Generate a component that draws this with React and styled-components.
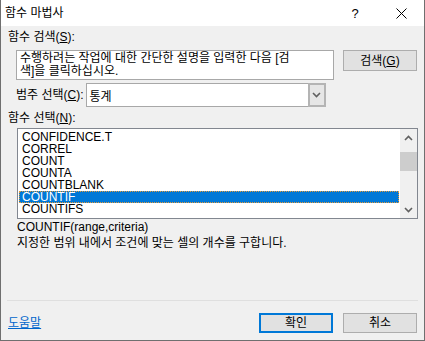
import React from 'react'
import styled, { createGlobalStyle } from 'styled-components'

const GlobalStyle = createGlobalStyle`
  html, body {
    margin: 0;
    padding: 0;
    background: #f0f0f0;
  }
  body {
    font-family: "Liberation Sans", "Noto Sans CJK KR", sans-serif;
    font-size: 12px;
    color: #000;
  }
`;

const Window = styled.div`
width: 425px;
height: 341px;
box-sizing: border-box;
border: 1px solid #6f6f6f;
border-top: none;
display: flex;
flex-direction: column;
background: #f0f0f0;
overflow: hidden;
`;

const TitleBar = styled.div`
height: 26px;
background: #ffffff;
display: flex;
align-items: center;
padding-left: 4px;
flex-shrink: 0;
`;

const Title = styled.div`
flex: 1;
line-height: 14px;
`;

const TitleButton = styled.div`
width: 46px;
height: 26px;
display: flex;
align-items: center;
justify-content: center;
font-size: 13px;
`;

const Body = styled.div`
flex: 1;
display: flex;
flex-direction: column;
padding: 4px 6px 7px 6px;
`;

const Label = styled.div`
line-height: 14px;
height: 14px;
margin-top: ${({ top }) => top || 0}px;
margin-left: ${({ indent }) => indent || 0}px;
white-space: nowrap;
`;

const SearchRow = styled.div`
display: flex;
align-items: flex-start;
gap: 9px;
margin: 6px 0 0 9px;
`;

const SearchBox = styled.div`
width: 318px;
height: 30px;
box-sizing: border-box;
background: #fff;
border: 1px solid #a8a8a8;
padding: 1px 3px;
line-height: 13px;
`;

const Button = styled.div`
width: ${({ w }) => w || 74}px;
height: ${({ h }) => h || 21}px;
box-sizing: border-box;
background: #e1e1e1;
border: ${({ primary }) => (primary ? '2px solid #0078d7' : '1px solid #adadad')};
display: flex;
align-items: center;
justify-content: center;
line-height: 14px;
`;

const CategoryRow = styled.div`
display: flex;
align-items: center;
margin: 3px 0 0 9px;
gap: 2px;
`;

const Select = styled.div`
width: 240px;
height: 24px;
box-sizing: border-box;
background: #fff;
border: 1px solid #a8a8a8;
display: flex;
align-items: stretch;
`;

const SelectValue = styled.div`
flex: 1;
padding-left: 3px;
display: flex;
align-items: center;
`;

const SelectArrow = styled.div`
width: 18px;
box-sizing: border-box;
background: #e6e6e6;
border: 2px solid #b4b4b4;
border-right: none;
margin: -1px -1px -1px 0;
border-right: 2px solid #b4b4b4;
display: flex;
align-items: center;
justify-content: center;
`;

const ListBox = styled.div`
width: 401px;
height: 91px;
box-sizing: border-box;
margin: 3px 0 0 10px;
background: #fff;
border: 1px solid #828790;
display: flex;
`;

const Items = styled.div`
flex: 1;
padding: 2px 1px 0 1px;
`;

const Item = styled.div`
height: 12px;
line-height: 12px;
padding-left: 3px;
box-sizing: border-box;
background: ${({ selected }) => (selected ? '#0078d7' : 'transparent')};
color: ${({ selected }) => (selected ? '#fff' : '#000')};
outline: ${({ selected }) => (selected ? '1px dotted #e39a3a' : 'none')};
outline-offset: -1px;
white-space: nowrap;
`;

const ScrollBar = styled.div`
width: 17px;
background: #f0f0f0;
display: flex;
flex-direction: column;
align-items: center;
`;

const ScrollArrow = styled.div`
height: 17px;
width: 17px;
display: flex;
align-items: center;
justify-content: center;
`;

const Track = styled.div`
flex: 1;
width: 17px;
`;

const Thumb = styled.div`
height: 19px;
margin-top: 6px;
background: #cdcdcd;
`;

const Description = styled.div`
margin-left: 10px;
line-height: 16px;
`;

const Spacer = styled.div`
flex: 1;
`;

const Separator = styled.div`
height: 1px;
background: #dfdfdf;
margin-bottom: 12px;
`;

const Footer = styled.div`
display: flex;
align-items: center;
gap: 10px;
padding-right: 1px;
`;

const HelpLink = styled.a`
flex: 1;
color: #0066cc;
text-decoration: underline;
line-height: 14px;
padding-left: 1px;
`;

const Chevron = ({ up }) => (
  <svg width="9" height="6" viewBox="0 0 9 6">
    <path
      d={up ? 'M1 5 L4.5 1.5 L8 5' : 'M1 1 L4.5 4.5 L8 1'}
      fill="none"
      stroke="#606060"
      strokeWidth="1.6"
    />
  </svg>
);

const functions = [
  'CONFIDENCE.T',
  'CORREL',
  'COUNT',
  'COUNTA',
  'COUNTBLANK',
  'COUNTIF',
  'COUNTIFS',
];

const App = () => {
  return (
    <>
      <GlobalStyle />
      <Window>
        <TitleBar>
          <Title>함수 마법사</Title>
          <TitleButton>?</TitleButton>
          <TitleButton>
            <svg width="11" height="11" viewBox="0 0 11 11">
              <path d="M0.5 0.5 L10.5 10.5 M10.5 0.5 L0.5 10.5" stroke="#000" strokeWidth="1" />
            </svg>
          </TitleButton>
        </TitleBar>
        <Body>
          <Label indent={1}>함수 검색(<u>S</u>):</Label>
          <SearchRow>
            <SearchBox>
              수행하려는 작업에 대한 간단한 설명을 입력한 다음 [검
              <br />
              색]을 클릭하십시오.
            </SearchBox>
            <Button>검색(<u>G</u>)</Button>
          </SearchRow>
          <CategoryRow>
            <Label>범주 선택(<u>C</u>):</Label>
            <Select>
              <SelectValue>통계</SelectValue>
              <SelectArrow>
                <Chevron />
              </SelectArrow>
            </Select>
          </CategoryRow>
          <Label indent={1} top={4}>함수 선택(<u>N</u>):</Label>
          <ListBox>
            <Items>
              {functions.map((name) => (
                <Item key={name} selected={name === 'COUNTIF'}>{name}</Item>
              ))}
            </Items>
            <ScrollBar>
              <ScrollArrow><Chevron up /></ScrollArrow>
              <Track>
                <Thumb />
              </Track>
              <ScrollArrow><Chevron /></ScrollArrow>
            </ScrollBar>
          </ListBox>
          <Description>
            COUNTIF(range,criteria)
            <br />
            지정한 범위 내에서 조건에 맞는 셀의 개수를 구합니다.
          </Description>
          <Spacer />
          <Separator />
          <Footer>
            <HelpLink>도움말</HelpLink>
            <Button primary w={74} h={20}>확인</Button>
            <Button w={74} h={20}>취소</Button>
          </Footer>
        </Body>
      </Window>
    </>
  )
}

export default App
